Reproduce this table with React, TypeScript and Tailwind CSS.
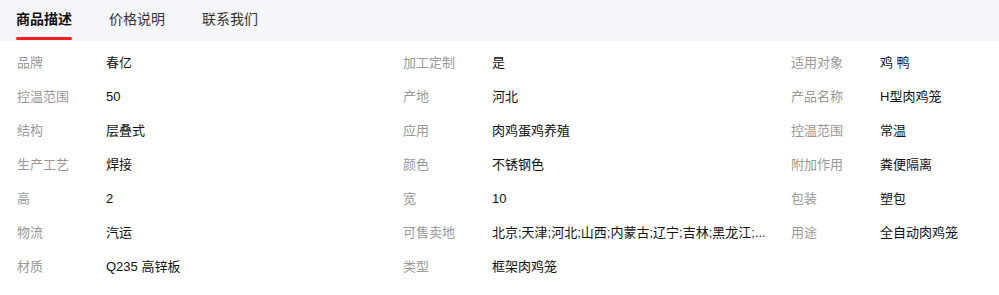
import React, { useState } from 'react';

const tabs = ['商品描述', '价格说明', '联系我们'];

const rows: [string, string][][] = [
  [['品牌', '春亿'], ['加工定制', '是'], ['适用对象', '鸡 鸭']],
  [['控温范围', '50'], ['产地', '河北'], ['产品名称', 'H型肉鸡笼']],
  [['结构', '层叠式'], ['应用', '肉鸡蛋鸡养殖'], ['控温范围', '常温']],
  [['生产工艺', '焊接'], ['颜色', '不锈钢色'], ['附加作用', '粪便隔离']],
  [['高', '2'], ['宽', '10'], ['包装', '塑包']],
  [['物流', '汽运'], ['可售卖地', '北京;天津;河北;山西;内蒙古;辽宁;吉林;黑龙江;...'], ['用途', '全自动肉鸡笼']],
  [['材质', 'Q235 高锌板'], ['类型', '框架肉鸡笼']],
];

export default function App() {
  const [active, setActive] = useState('商品描述');

  return (
    <div className="w-[999px] h-[295px] bg-white overflow-hidden font-['Liberation_Sans','Noto_Sans_CJK_SC',sans-serif]">
      <div className="h-[41px] bg-[#f5f6fa] flex items-stretch gap-[37px] pl-[16px]">
        {tabs.map(t => (
          <button
            key={t}
            onClick={() => setActive(t)}
            className={
              "relative text-[14px] leading-none pt-[12px] self-stretch flex items-start " +
              (active === t ? "font-bold text-[#111]" : "text-[#333]")
            }
          >
            {t}
            {active === t && (
              <span className="absolute left-0 right-0 bottom-[1px] h-[3px] rounded-full bg-[#ff1d1d]" />
            )}
          </button>
        ))}
      </div>

      <div className="pt-[5px] pl-[17px]">
        {rows.map((row, i) => (
          <div key={i} className="grid grid-cols-[386px_388px_1fr] h-[34px] items-center text-[13px]">
            {row.map(([k, v]) => (
              <div key={k + v} className="flex items-center min-w-0">
                <span className="w-[89px] shrink-0 text-[#999]">{k}</span>
                <span className="whitespace-nowrap text-[#111]">{v}</span>
              </div>
            ))}
          </div>
        ))}
      </div>
    </div>
  );
}
